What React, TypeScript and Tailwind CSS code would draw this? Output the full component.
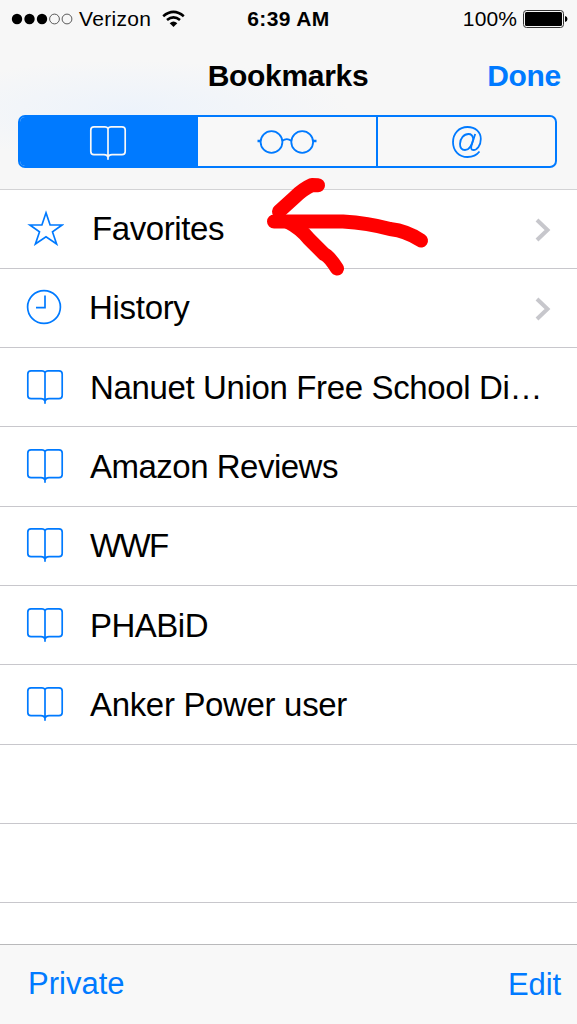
interface BookmarkRow {
  title: string
  icon: 'star' | 'clock' | 'book'
  folder?: boolean
  className: string
}

const rows: BookmarkRow[] = [
  { title: 'Favorites', icon: 'star', folder: true, className: 'ml-[28px] tracking-[-0.4px]' },
  { title: 'History', icon: 'clock', folder: true, className: 'ml-[25px] tracking-[-0.3px]' },
  { title: 'Nanuet Union Free School Di…', icon: 'book', className: 'ml-[26px] tracking-[-0.36px]' },
  { title: 'Amazon Reviews', icon: 'book', className: 'ml-[26px] tracking-[-0.5px]' },
  { title: 'WWF', icon: 'book', className: 'ml-[26px] tracking-[-1.7px]' },
  { title: 'PHABiD', icon: 'book', className: 'ml-[26px] tracking-[-0.5px]' },
  { title: 'Anker Power user', icon: 'book', className: 'ml-[26px] tracking-[-0.33px]' },
]

function BookIcon() {
  return (
    <svg width="38" height="36" viewBox="0 0 38 36" fill="none" stroke="currentColor" strokeWidth="1.7">
      <path d="M19 3.5Q18 1.8 16 1.8H5Q1.8 1.8 1.8 5V26.5Q1.8 29.7 5 29.7H15Q18.3 29.7 19 32.2Q19.7 29.7 23 29.7H33Q36.2 29.7 36.2 26.5V5Q36.2 1.8 33 1.8H22Q20 1.8 19 3.5V34.7" />
    </svg>
  )
}

function StarIcon() {
  return (
    <svg width="38" height="36" viewBox="0 0 38 36" fill="none" stroke="currentColor" strokeWidth="1.7">
      <path d="M20 2.8L24.1 15H36.1L26.5 21.9L30.6 34L20 26.8L9.4 34L13.5 21.9L3.9 15H15.9Z" />
    </svg>
  )
}

function ClockIcon() {
  return (
    <svg width="38" height="36" viewBox="0 0 38 36" fill="none" stroke="currentColor" strokeWidth="1.7">
      <circle cx="18" cy="18" r="16.4" />
      <path d="M19 6.5V18.7H10" />
    </svg>
  )
}

function GlassesIcon() {
  return (
    <svg width="60" height="26" viewBox="0 0 60 26" fill="none" stroke="currentColor" strokeWidth="1.8">
      <circle cx="14.5" cy="13" r="10.9" />
      <circle cx="45.2" cy="13" r="10.9" />
      <path d="M25.3 11.8Q29.8 8.3 34.4 11.8" />
      <path d="M.5 12H4M55.7 12H59.5" strokeWidth="2.4" />
    </svg>
  )
}

function AtIcon() {
  return (
    <svg width="32" height="34" viewBox="0 0 32 34" fill="none" stroke="currentColor" strokeWidth="1.8">
      <path d="M28.5 26.5C25.8 30 21.5 32 16.5 32C8 32 2 25.7 2 17.2C2 8.5 8 2 16.5 2C24.5 2 29.8 7.2 29.8 14C29.8 20.5 26 25 22.5 25C20 25 19.8 23 20.5 20.5L24.2 9" />
      <path d="M22.3 14C21.8 10.5 20 9 17.5 9C13 9 9 13.5 9 19C9 22.8 11 25 14 25C18 25 21 20 22.3 14Z" />
    </svg>
  )
}

function WifiIcon() {
  return (
    <svg width="23" height="18" viewBox="0 0 23 18" fill="none" stroke="black" strokeWidth="2.6">
      <path d="M1.2 6.2Q11.5 -2.4 21.8 6.2M5 10.1Q11.5 4.6 18 10.1" />
      <path d="M7.7 13.2Q11.5 10 15.3 13.2L11.5 17Z" fill="black" stroke="none" />
    </svg>
  )
}

function Chevron() {
  return (
    <svg className="mt-[3px]" width="16" height="24" viewBox="0 0 16 24" fill="none" stroke="#c7c7cc" strokeWidth="4">
      <path d="M2 2L12.5 12L2 22" />
    </svg>
  )
}

function StatusBar() {
  return (
    <div className="grid h-[37px] grid-cols-3 items-center text-[21px] leading-none">
      <div className="flex items-center pl-[11px]">
        <svg width="62" height="12" viewBox="0 0 62 12">
          <circle cx="6" cy="6" r="5.2" />
          <circle cx="18.5" cy="6" r="5.2" />
          <circle cx="31" cy="6" r="5.2" />
          <circle cx="43.5" cy="6" r="4.9" fill="none" stroke="#333" strokeWidth=".8" />
          <circle cx="56" cy="6" r="4.9" fill="none" stroke="#333" strokeWidth=".8" />
        </svg>
        <span className="ml-[6px] mr-[11px] tracking-[0.3px]">Verizon</span>
        <WifiIcon />
      </div>
      <div className="text-center font-bold tracking-[0.4px]">6:39 AM</div>
      <div className="flex items-center justify-end pr-[9px]">
        <span className="mr-[6px] tracking-[0.1px]">100%</span>
        <svg width="45" height="18" viewBox="0 0 45 18">
          <rect x=".5" y=".5" width="40" height="17" rx="3" fill="none" stroke="#333" />
          <rect x="2" y="2" width="37" height="14" rx="1.5" />
          <path d="M42 6Q44.5 6.5 44.5 9Q44.5 11.5 42 12Z" />
        </svg>
      </div>
    </div>
  )
}

export default function App() {
  return (
    <div className="relative flex h-[1024px] w-[577px] flex-col overflow-hidden bg-white font-['Liberation_Sans',sans-serif] text-black">
      <header className="h-[189.5px] shrink-0 border-b border-[#d3d3d5] bg-[#f7f7f7] bg-[radial-gradient(ellipse_220px_50px_at_130px_110px,#edf3fb,#f7f7f700)]">
        <StatusBar />
        <div className="grid h-[78px] grid-cols-[1fr_192px_1fr] items-center pr-4 text-[30px] font-bold leading-none">
          <h1 className="col-start-2 whitespace-nowrap pl-[15px] text-center tracking-[-0.3px]">Bookmarks</h1>
          <button className="text-right font-bold tracking-[-0.3px] text-[#007aff]">Done</button>
        </div>
        <div className="ml-[18px] grid h-[53px] w-[539px] grid-cols-[178px_180px_1fr] overflow-hidden rounded-[7px] border-2 border-[#007aff] bg-[#f8f8f8] text-[#007aff]">
          <div className="flex items-center justify-center bg-[#007aff] pt-[2px] pr-[2px] text-[#f8f8f8]"><BookIcon /></div>
          <div className="flex items-center justify-center border-r-2 border-[#007aff]"><GlassesIcon /></div>
          <div className="flex items-center justify-center"><AtIcon /></div>
        </div>
      </header>

      <main className="min-h-0 flex-1 overflow-hidden">
        {rows.map((row) => (
          <div key={row.title} className="flex h-[79.33px] items-center border-b border-[#c8c7cc] pr-[26px] pb-[1px] pl-[26px]">
            <span className="shrink-0 text-[#007aff]">
              {row.icon === 'star' && <StarIcon />}
              {row.icon === 'clock' && <ClockIcon />}
              {row.icon === 'book' && <BookIcon />}
            </span>
            <span className={`flex-1 whitespace-nowrap pt-[1px] text-[33px] leading-none ${row.className}`}>{row.title}</span>
            {row.folder && <Chevron />}
          </div>
        ))}
        {/* empty rows */}
        <div className="h-[79.33px] border-b border-[#c8c7cc]" />
        <div className="h-[79.33px] border-b border-[#c8c7cc]" />
      </main>

      <footer className="flex h-[80px] shrink-0 items-center justify-between border-t border-[#b9b9bb] bg-[#f8f8f8] pr-[16px] pl-[28px] text-[31px] text-[#007aff]">
        <button>Private</button>
        <button className="pt-[2px] tracking-[-0.1px]">Edit</button>
      </footer>

      {/* hand-drawn arrow */}
      <svg className="absolute left-[260px] top-[170px]" width="175" height="110" viewBox="260 170 175 110" fill="none" stroke="#ff0000" strokeWidth="14" strokeLinecap="round" strokeLinejoin="round">
        <path d="M318 185.3L312 185Q303 189 295 197L279 211.5" />
        <path d="M274 221.5H343Q368 223 390 229Q407 231 421 240.5" />
        <path d="M288 222Q300 228 309 239L324 254Q329 256 337 268.5" />
      </svg>
    </div>
  )
}
